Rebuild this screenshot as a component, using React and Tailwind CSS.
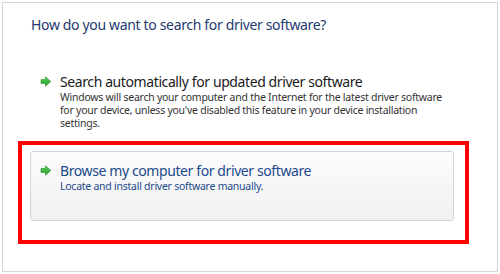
import React from "react";

function Arrow() {
  return (
    <svg width="12" height="11" viewBox="0 0 12 11" className="shrink-0">
      <defs>
        <linearGradient id="g" x1="0" y1="0" x2="0" y2="1">
          <stop offset="0" stopColor="#5fd35a" />
          <stop offset="1" stopColor="#1d9a27" />
        </linearGradient>
      </defs>
      <path d="M1 3.5 H5.5 V0.8 L10.8 5.5 L5.5 10.2 V7.5 H1 Z" fill="url(#g)" stroke="#2a8f2a" strokeWidth="0.6" strokeLinejoin="round" />
    </svg>
  );
}

export default function App() {
  const font = { fontFamily: '"Noto Sans", "Open Sans", sans-serif' };
  return (
    <div className="w-[500px] h-[274px] bg-white p-[2px]" style={font}>
      <div className="h-full border border-[#d6d6d6] pl-[15px] pt-[12px] flex flex-col">
        <div className="ml-[13px] text-[14px] leading-[20px] text-[#1e3a6e] tracking-[-0.34px]">
          How do you want to search for driver software?
        </div>
        <div className="mt-[37px] ml-[22px] flex">
          <div className="pt-[4px]"><Arrow /></div>
          <div className="ml-[8px]">
            <div className="text-[14px] leading-[19px] text-[#1a1a1a] tracking-[-0.4px]">
              Search automatically for updated driver software
            </div>
            <div className="text-[10.5px] leading-[13px] text-[#333] w-[390px] tracking-[-0.25px]">
              Windows will search your computer and the Internet for the latest driver software for your device, unless you've disabled this feature in your device installation settings.
            </div>
          </div>
        </div>
        <div className="mt-[11px] w-[451px] h-[103px] border-4 border-[#ff0000] pl-[8px] pt-[6px]">
          <div className="w-[424px] h-[70px] rounded-[3px] border border-[#d2d2d2] bg-gradient-to-b from-[#fcfcfc] to-[#f0f0f0] pl-[9px] pt-[9px] flex">
            <div className="pt-[4px]"><Arrow /></div>
            <div className="ml-[8px]">
              <div className="text-[14px] leading-[19px] text-[#1c4a8c] tracking-[-0.4px]">
                Browse my computer for driver software
              </div>
              <div className="text-[10.5px] leading-[13px] text-[#1c4a8c] tracking-[-0.25px]">
                Locate and install driver software manually.
              </div>
            </div>
          </div>
        </div>
      </div>
    </div>
  );
}
